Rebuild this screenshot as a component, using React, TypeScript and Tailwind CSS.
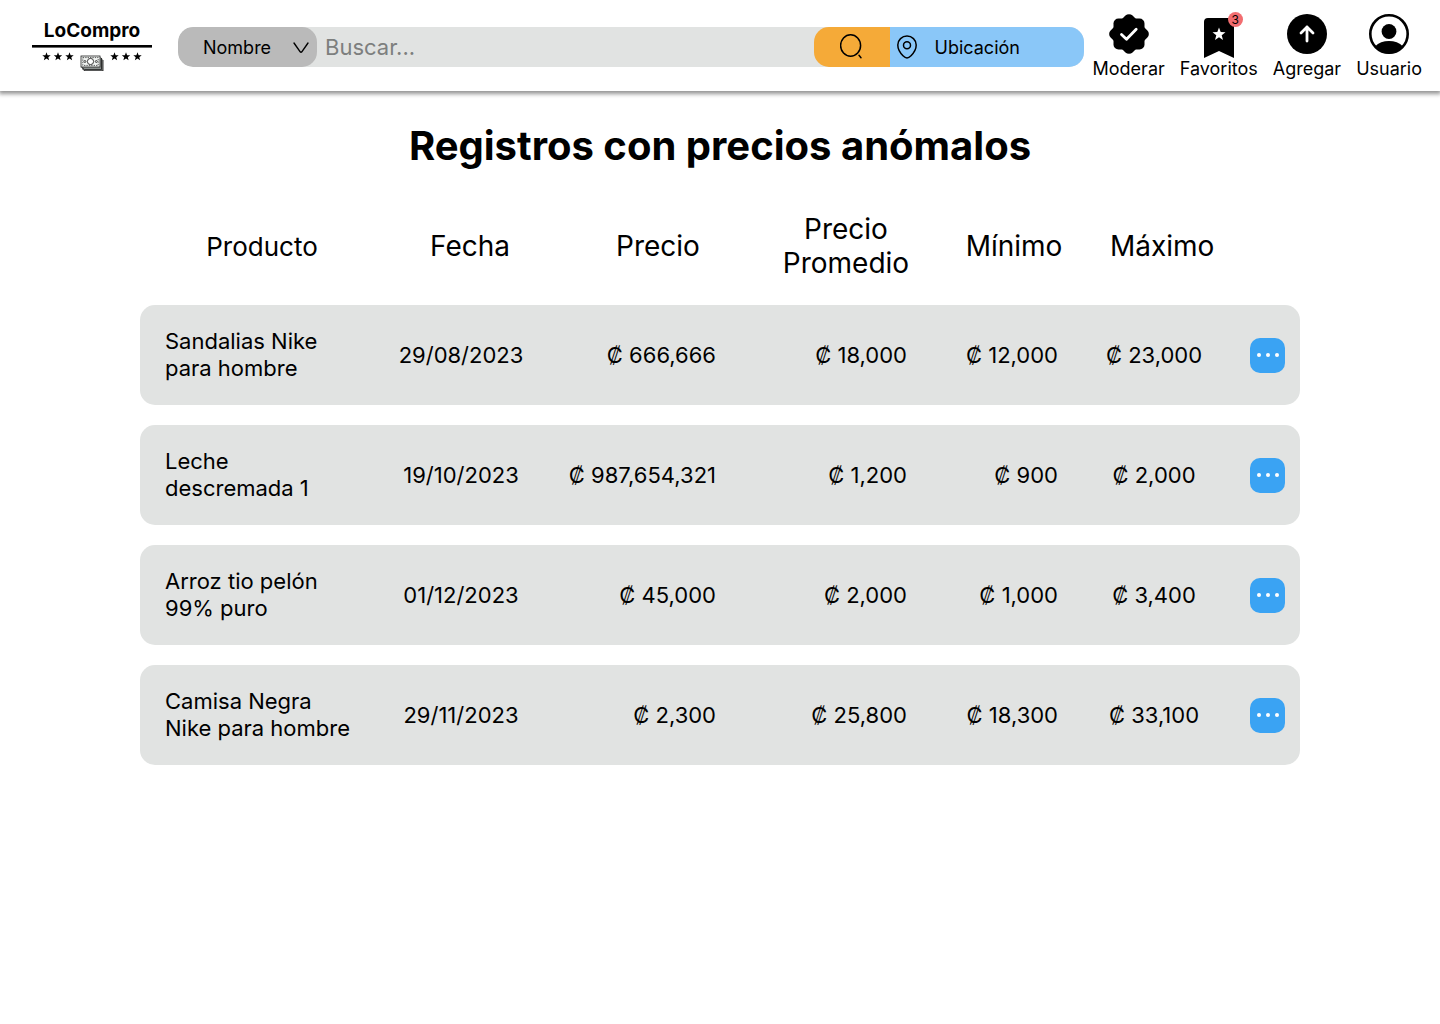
import React from "react";

type Row = {
  producto: string;
  fecha: string;
  precio: string;
  promedio: string;
  minimo: string;
  maximo: string;
};

const rows: Row[] = [
  { producto: "Sandalias Nike para hombre", fecha: "29/08/2023", precio: "666,666", promedio: "18,000", minimo: "12,000", maximo: "23,000" },
  { producto: "Leche descremada 1", fecha: "19/10/2023", precio: "987,654,321", promedio: "1,200", minimo: "900", maximo: "2,000" },
  { producto: "Arroz tio pelón 99% puro", fecha: "01/12/2023", precio: "45,000", promedio: "2,000", minimo: "1,000", maximo: "3,400" },
  { producto: "Camisa Negra Nike para hombre", fecha: "29/11/2023", precio: "2,300", promedio: "25,800", minimo: "18,300", maximo: "33,100" },
];

const STAR = "M0-4.2 1.1-1.3 4.2-1.2 1.8.7 2.6 3.8 0 2-2.6 3.8-1.8.7-4.2-1.2-1.1-1.3Z";

function Logo() {
  return (
    <a href="#" className="mb-1 flex w-[120px] shrink-0 flex-col items-center text-black">
      <span className="text-[19px] leading-6 font-bold">LoCompro</span>
      <svg viewBox="0 0 120 28" className="h-7 w-[120px]" aria-hidden="true">
        <rect x="0" y="2" width="120" height="2.6" />
        {[14.5, 26, 37.5, 82.5, 94, 105.5].map((x) => (
          <path key={x} d={STAR} transform={`translate(${x} 13.5)`} />
        ))}
        <path d="M49 13.5h19l3 3V28H53l-4-4Z" fill="#8b908e" />
        <path d="M50 25.5 53 28h18V17M49.5 24l3 2.6H69.5V15" fill="none" stroke="#222" strokeWidth=".9" />
        <rect x="49" y="13" width="19" height="11" fill="#f2f5f3" stroke="#222" strokeWidth=".8" />
        <rect x="50.8" y="14.6" width="15.4" height="7.8" fill="none" stroke="#333" strokeWidth=".8" strokeDasharray="1.4 1" />
        <circle cx="58.5" cy="18.5" r="3.1" fill="#fff" stroke="#222" strokeWidth=".9" />
        <circle cx="52.9" cy="18.5" r="1" fill="none" stroke="#222" strokeWidth=".8" />
        <circle cx="64.3" cy="18.5" r="1" fill="none" stroke="#222" strokeWidth=".8" />
      </svg>
    </a>
  );
}

function SearchBar() {
  return (
    <form className="flex h-10 min-w-0 flex-1 overflow-hidden rounded-[15px] bg-[#e1e3e2]" onSubmit={(e) => e.preventDefault()}>
      <div className="relative w-[139px] shrink-0">
        <select aria-label="Buscar por" className="h-full w-full appearance-none rounded-[15px] bg-[#bababa] pr-10 pl-[25px] text-[18px] text-black">
          <option>Nombre</option>
        </select>
        <svg viewBox="0 0 16 12" className="pointer-events-none absolute top-[15px] right-2 h-3 w-4" fill="none" stroke="#000" strokeWidth="1.4" strokeLinecap="round" strokeLinejoin="round" aria-hidden="true">
          <path d="M1 1 7.2 9.8q.8 1 1.6 0L15 1" />
        </svg>
      </div>
      <input aria-label="Buscar" placeholder="Buscar..." className="min-w-0 flex-1 bg-transparent px-2 text-[22px] text-black placeholder:text-[#7d7f7e]" />
      <button type="submit" aria-label="Buscar" className="flex w-[76px] shrink-0 items-center justify-center rounded-l-[15px] bg-[#f5aa38]">
        <svg viewBox="0 0 24 26" className="h-[26px] w-6" fill="none" stroke="#000" strokeWidth="1.5" strokeLinecap="round" aria-hidden="true">
          <ellipse cx="10.6" cy="11.5" rx="10" ry="10.7" />
          <path d="m19 21.3 2 2.4" />
        </svg>
      </button>
      <button type="button" className="flex w-[194px] shrink-0 items-center gap-[18px] bg-[#8ac7f8] pl-[7px] text-[18px] text-black">
        <svg viewBox="0 0 20 24" className="h-6 w-5" fill="none" stroke="#000" strokeWidth="1.5" aria-hidden="true">
          <path d="M10 1C5 1 .8 4.9.8 10c0 4 2 7.5 5.2 10.800C7.600 22.400 8.800 23 10 23s2.400-.6 4-2.200c3.200-3.300 5.200-6.800 5.200-10.800C19.200 4.900 15 1 10 1Z" />
          <circle cx="10" cy="10.3" r="3.5" />
        </svg>
        Ubicación
      </button>
    </form>
  );
}

function NavItem({ label, badge, children }: { label: string; badge?: string; children: React.ReactNode }) {
  return (
    <a href="#" className="flex flex-col items-center text-[18px] leading-[22px] text-black">
      <span className="relative mb-1 block h-10 w-10">
        <svg viewBox="0 0 40 40" className="h-10 w-10 overflow-visible" aria-hidden="true">{children}</svg>
        {badge && (
          <span className="absolute -top-0.5 -right-1 flex h-[15px] w-[15px] items-center justify-center rounded-full bg-[#f26d70] text-[12px] leading-none">{badge}</span>
        )}
      </span>
      {label}
    </a>
  );
}

function Amount({ value }: { value: string }) {
  return <span className="whitespace-nowrap">₡ {value}</span>;
}

export default function App() {
  return (
    <div className="min-h-screen bg-white font-['Inter',sans-serif] text-black">
      <header className="flex items-center bg-white pt-3.5 pr-[18px] pb-[11px] pl-8 shadow-[0_2px_4px_1px_rgba(0,0,0,0.42)]">
        <Logo />
        <div className="ml-[26px] flex min-w-0 flex-1">
          <SearchBar />
        </div>
        <nav className="ml-[9px] flex shrink-0 gap-[15px]">
          <NavItem label="Moderar">
            <rect x="4.5" y="4.5" width="31" height="31" rx="5" />
            <rect x="4.5" y="4.5" width="31" height="31" rx="5" transform="rotate(45 20 20)" />
            <path d="m12.5 20.5 5 4.8 9.7-10" fill="none" stroke="#fff" strokeWidth="2.8" strokeLinecap="round" strokeLinejoin="round" />
          </NavItem>
          <NavItem label="Favoritos" badge="3">
            <path d="M5 8a4 4 0 0 1 4-4h22a4 4 0 0 1 4 4v36l-15-7-15 7Z" />
            <path d="m20 13.5 1.7 4.5 4.8.2-3.8 3 1.3 4.7-4-2.7-4 2.7 1.3-4.7-3.8-3 4.8-.2Z" fill="#fff" />
          </NavItem>
          <NavItem label="Agregar">
            <circle cx="20" cy="20" r="20" />
            <path d="M20 27V13m-6 6 6-6 6 6" fill="none" stroke="#fff" strokeWidth="2.8" strokeLinecap="round" strokeLinejoin="round" />
          </NavItem>
          <NavItem label="Usuario">
            <circle cx="20" cy="20" r="18.7" fill="#fff" stroke="#000" strokeWidth="2.6" />
            <circle cx="20" cy="17.5" r="7.4" />
            <path d="M6 32.5c3.500-3.800 8.500-5.500 14-5.500s10.500 1.700 14 5.500C30.500 37 25.500 39.500 20 39.500S9.500 37 6 32.500Z" />
          </NavItem>
        </nav>
      </header>

      <main className="mx-auto max-w-[1160px] pt-[31px]">
        <h1 className="text-center text-[40px] leading-[48px] font-bold">Registros con precios anómalos</h1>
        <table className="mt-[17px] w-full table-fixed border-separate border-spacing-x-0 border-spacing-y-5 text-[22px] leading-[27px]">
          <colgroup>
            <col className="w-[244px]" />
            <col className="w-[154px]" />
            <col className="w-[240px]" />
            <col className="w-[136px]" />
            <col className="w-[180px]" />
            <col className="w-[120px]" />
            <col className="w-[86px]" />
          </colgroup>
          <thead>
            <tr className="h-[78px] text-[28px] leading-[34px] *:p-0 *:font-normal">
              <th scope="col"><span className="text-[26px]">Producto</span></th>
              <th scope="col"><span className="pl-[18px]">Fecha</span></th>
              <th scope="col">Precio</th>
              <th scope="col">Precio Promedio</th>
              <th scope="col"><span className="pl-5">Mínimo</span></th>
              <th scope="col"><span className="pl-4">Máximo</span></th>
              <th scope="col" aria-label="Acciones" />
            </tr>
          </thead>
          <tbody>
            {rows.map((r) => (
              <tr key={r.producto} className="h-[100px] *:bg-[#e1e3e2]">
                <td className="rounded-l-[15px] pl-[25px]">
                  <div className="max-w-[190px]">{r.producto}</div>
                </td>
                <td className="text-center">{r.fecha}</td>
                <td className="pr-[62px] text-right"><Amount value={r.precio} /></td>
                <td className="pr-[7px] text-right"><Amount value={r.promedio} /></td>
                <td className="pr-9 text-right"><Amount value={r.minimo} /></td>
                <td className="text-center"><Amount value={r.maximo} /></td>
                <td className="rounded-r-[15px] pr-[15px]">
                  <button type="button" aria-label={`Opciones de ${r.producto}`} className="ml-auto flex h-[35px] w-[35px] items-center justify-center gap-[5px] rounded-[10px] bg-[#3aa3f3]">
                    <span className="h-1 w-1 rounded-full bg-white" />
                    <span className="h-1 w-1 rounded-full bg-white" />
                    <span className="h-1 w-1 rounded-full bg-white" />
                  </button>
                </td>
              </tr>
            ))}
          </tbody>
        </table>
      </main>
    </div>
  );
}
